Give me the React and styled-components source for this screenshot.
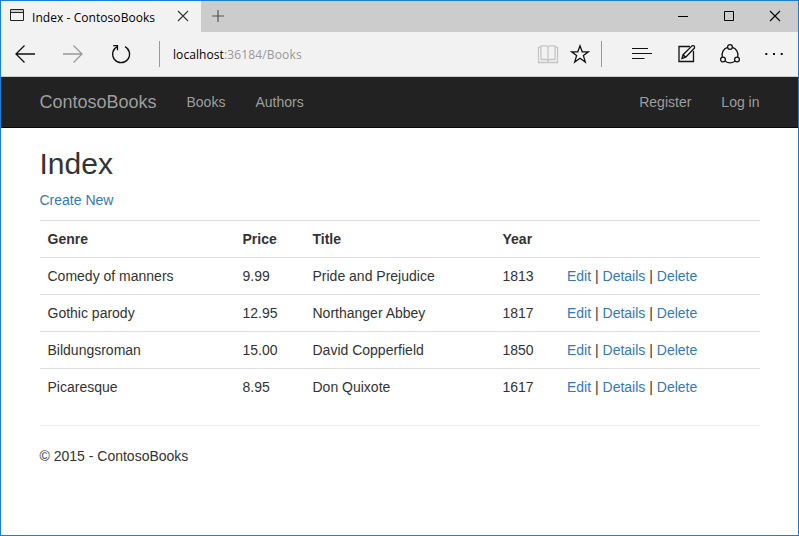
import React from "react";
import styled, { createGlobalStyle } from "styled-components";

const Global = createGlobalStyle`
  *, *::before, *::after { box-sizing: border-box; }
  html, body { margin: 0; padding: 0; background: #fff; overflow: hidden; }
`;

const Window = styled.div`
  width: 799px;
  height: 536px;
  border: 1px solid #1a80d4;
  background: #fff;
  color: #333;
  font: 14px/20px "Liberation Sans", Arial, sans-serif;
  overflow: hidden;
`;

const TabStrip = styled.div`
  display: flex;
  height: 31px;
  background: #ccc;
`;

const Tab = styled.div`
  display: flex;
  align-items: flex-start;
  width: 200px;
  height: 31px;
  padding-left: 9px;
  background: #f2f2f2;
`;

const ChromeText = styled.span`
  font-family: "Open Sans", "Noto Sans", sans-serif;
  font-size: 12px;
  line-height: 16px;
  letter-spacing: ${(p) => p.$spacing || "0"};
  color: ${(p) => p.$color || "#000"};
  white-space: pre;
`;

const TabTitle = styled(ChromeText)`
  width: 145px;
  margin: 9px 0 0 8px;
`;

const Icon = styled.svg`
  display: block;
  flex: none;
  overflow: visible;
  fill: none;
  stroke: ${(p) => p.$stroke || "#111"};
  stroke-width: ${(p) => p.$weight || 1.3};
  margin-left: ${(p) => p.$gap || 0}px;
  margin-top: ${(p) => p.$top || 0}px;
`;

const WindowControls = styled.div`
  display: flex;
  margin-left: auto;
  padding-right: 18px;
`;

const Toolbar = styled.div`
  display: flex;
  align-items: center;
  height: 45px;
  padding-left: 14px;
  background: #f2f2f2;
  border-bottom: 1px solid #ccc;
`;

const Divider = styled.div`
  flex: none;
  width: 1px;
  height: 26px;
  margin-left: ${(p) => p.$gap}px;
  background: #999;
`;

const Address = styled.div`
  flex: none;
  display: flex;
  width: 365px;
  padding: 2px 0 0 13px;
`;

const NavBar = styled.nav`
  display: flex;
  align-items: center;
  height: 51px;
  padding: 0 38.5px 0 38.5px;
  background: #222;
  border-bottom: 1px solid #080808;
`;

const Brand = styled.a`
  width: 147px;
  font-size: 18px;
  color: #9d9d9d;
`;

const NavLinks = styled.div`
  display: flex;
  gap: 30px;
  margin-left: ${(p) => (p.$end ? "auto" : "0")};
`;

const NavLink = styled.a`
  color: #9d9d9d;
`;

const Page = styled.main`
  padding: 0 38px 0 39px;
`;

const Heading = styled.h2`
  margin: 19px 0 10px -0.5px;
  font-size: 30px;
  line-height: 33px;
  font-weight: 400;
`;

const Link = styled.a`
  color: #337ab7;
`;

const Create = styled.p`
  margin: 0 0 10px -0.5px;
`;

const Table = styled.table`
  width: 720px;
  table-layout: fixed;
  border-collapse: separate;
  border-spacing: 0;
`;

const Col = styled.col`
  width: ${(p) => p.$width}px;
`;

const Cell = styled.td`
  height: 37px;
  padding: 8px 8px 8px 7.5px;
  border-top: 1px solid #ddd;
  text-align: left;
  vertical-align: top;
  white-space: nowrap;
`;

const HeadCell = styled(Cell).attrs({ as: "th" })`
  font-weight: 700;
`;

const Footer = styled.footer`
  margin-top: 20px;
  padding-top: 20px;
  border-top: 1px solid #eee;
`;

const FooterText = styled.p`
  margin: 0 0 0 -0.5px;
`;

const books = [
  ["Comedy of manners", "9.99", "Pride and Prejudice", "1813"],
  ["Gothic parody", "12.95", "Northanger Abbey", "1817"],
  ["Bildungsroman", "15.00", "David Copperfield", "1850"],
  ["Picaresque", "8.95", "Don Quixote", "1617"],
];

const widths = [195, 70, 190, 64.5, 200.5];

function BrowserTabs() {
  return (
    <TabStrip>
      <Tab>
        <Icon width="14" height="12" $top={8} $weight={1} $stroke="#222">
          <path d="M.5 .5H13.5V11.5H.5ZM.5 3.5H13.5" />
          <path d="M1 2H13" stroke="#aaa" />
        </Icon>
        <TabTitle $spacing="0.06px">Index - ContosoBooks</TabTitle>
        <Icon width="10" height="10" $gap={1} $top={10} $weight={1.1} $stroke="#333">
          <path d="M0 0L10 10M10 0L0 10" />
        </Icon>
      </Tab>
      <Icon width="12" height="12" $gap={11} $top={9} $weight={1.2} $stroke="#555">
        <path d="M6 0V12M0 6H12" />
      </Icon>
      <WindowControls>
        <Icon width="10" height="10" $top={10} $weight={1} $stroke="#000">
          <path d="M0 5.5H10" />
        </Icon>
        <Icon width="10" height="10" $gap={36} $top={10} $weight={1} $stroke="#000">
          <path d="M.5 .5H9.5V9.5H.5Z" />
        </Icon>
        <Icon width="10" height="10" $gap={36} $top={10} $weight={1.1} $stroke="#000">
          <path d="M0 0L10 10M10 0L0 10" />
        </Icon>
      </WindowControls>
    </TabStrip>
  );
}

function BrowserToolbar() {
  return (
    <Toolbar>
      <Icon width="20" height="18">
        <path d="M20 9H1M9.5 .5L1 9L9.5 17.5" />
      </Icon>
      <Icon width="20" height="18" $gap={28} $stroke="#999">
        <path d="M0 9H19M10.5 .5L19 9L10.5 17.5" />
      </Icon>
      <Icon width="20" height="20" $gap={28}>
        <path d="M6.2 2.6A8.5 8.5 0 1 0 14 2.6" />
        <path d="M2.2 1.6H6.5V6.2" />
      </Icon>
      <Divider $gap={28} />
      <Address>
        <ChromeText $spacing="0.07px">localhost</ChromeText>
        <ChromeText $spacing="0.15px" $color="#999">:36184/Books</ChromeText>
      </Address>
      <Icon width="20" height="18" $gap={13} $stroke="#c6c6c6">
        <path d="M3 2.5H.5V17.5H19.5V2.5H17M3 .8H8Q10 .8 10 2.5Q10 .8 12 .8H17V14.5H12Q10 14.5 10 16Q10 14.5 8 14.5H3ZM10 2V17" />
      </Icon>
      <Icon width="20" height="20" $gap={12}>
        <path d="M10 1.8L12.2 7.8H18.4L13.4 11.6L15.3 18L10 14.2L4.7 18L6.6 11.6L1.6 7.8H7.8Z" />
      </Icon>
      <Divider $gap={11} />
      <Icon width="20" height="12" $gap={30} $weight={1.2}>
        <path d="M0 .5H16M0 5.5H20M0 10.5H12.5" />
      </Icon>
      <Icon width="18" height="18" $gap={26}>
        <path d="M12 1.5H1V16.5H15.5V6" />
        <path d="M4 13.5L5.1 9.7L14 .9Q15.2 .2 16.2 1.1Q17 2 16.3 3.3L7.7 12.2ZM5.1 9.7L7.7 12.2" />
      </Icon>
      <Icon width="20" height="20" $gap={24}>
        <circle cx="10" cy="3" r="2.4" />
        <circle cx="3" cy="15.5" r="2.4" />
        <circle cx="17" cy="15.5" r="2.4" />
        <path d="M7.5 3.4A8 8 0 0 0 2.3 13M12.5 3.4A8 8 0 0 1 17.7 13M5.2 17.2A8.4 8.4 0 0 0 14.8 17.2" />
      </Icon>
      <Icon width="18" height="4" $gap={25} $stroke="none">
        <path fill="#111" d="M.3 1H2.3V3H.3ZM8 1H10V3H8ZM15.7 1H17.7V3H15.7Z" />
      </Icon>
    </Toolbar>
  );
}

export default function App() {
  return (
    <>
      <Global />
      <Window>
        <BrowserTabs />
        <BrowserToolbar />
        <NavBar>
          <Brand>ContosoBooks</Brand>
          <NavLinks>
            <NavLink>Books</NavLink>
            <NavLink>Authors</NavLink>
          </NavLinks>
          <NavLinks $end>
            <NavLink>Register</NavLink>
            <NavLink>Log in</NavLink>
          </NavLinks>
        </NavBar>
        <Page>
          <Heading>Index</Heading>
          <Create>
            <Link>Create New</Link>
          </Create>
          <Table>
            <colgroup>
              {widths.map((w, i) => (
                <Col key={i} $width={w} />
              ))}
            </colgroup>
            <tbody>
              <tr>
                {["Genre", "Price", "Title", "Year", ""].map((label, i) => (
                  <HeadCell key={i}>{label}</HeadCell>
                ))}
              </tr>
              {books.map((book) => (
                <tr key={book[0]}>
                  {book.map((value) => (
                    <Cell key={value}>{value}</Cell>
                  ))}
                  <Cell>
                    <Link>Edit</Link> | <Link>Details</Link> | <Link>Delete</Link>
                  </Cell>
                </tr>
              ))}
            </tbody>
          </Table>
          <Footer>
            <FooterText>© 2015 - ContosoBooks</FooterText>
          </Footer>
        </Page>
      </Window>
    </>
  );
}
